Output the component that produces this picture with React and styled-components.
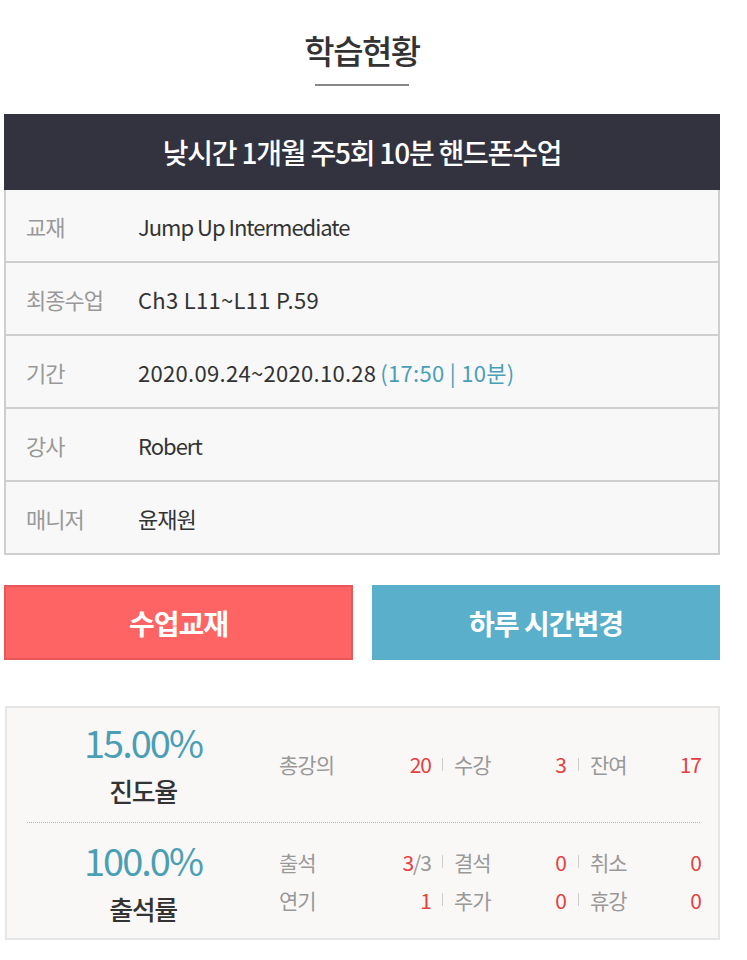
import React from 'react';
import styled, { createGlobalStyle } from 'styled-components';

const GlobalStyle = createGlobalStyle`
  body {
    margin: 0;
    background: #fff;
    font-family: "Noto Sans CJK KR", "Noto Sans", sans-serif;
    color: #333;
  }
`;

const Page = styled.div`
  width: 716px;
  padding: 0 0 20px 4px;
`;

const TitleWrap = styled.div`
  display: flex;
  flex-direction: column;
  align-items: center;
  padding-top: 26px;
  height: 88px;
`;

const Title = styled.h1`
  margin: 0;
  font-size: 33px;
  font-weight: 500;
  letter-spacing: -1.5px;
  line-height: 48px;
  color: #333;
`;

const TitleLine = styled.div`
  width: 94px;
  height: 2px;
  background: #888;
  margin-top: 10px;
`;

const CourseHeader = styled.div`
  height: 76px;
  background: #33323f;
  color: #fff;
  display: flex;
  align-items: center;
  justify-content: center;
  font-size: 28px;
  font-weight: 500;
  letter-spacing: -1.2px;
`;

const InfoTable = styled.div`
  border: 2px solid #cfcfcf;
  border-top: none;
  background: #f8f8f8;
`;

const InfoRow = styled.div`
  display: flex;
  align-items: center;
  height: 71px;
  border-top: ${p => (p.$first ? 'none' : '2px solid #cfcfcf')};
  font-size: 22px;
  letter-spacing: -1px;
`;

const InfoLabel = styled.div`
  width: 112px;
  padding-left: 20px;
  color: #999;
`;

const InfoValue = styled.div`
  color: #333;
  letter-spacing: ${p => (p.$numeric ? '0.3px' : '-1px')};
`;

const Accent = styled.span`
  color: #4a9fb8;
  margin-left: 4px;
`;

const ButtonRow = styled.div`
  display: grid;
  grid-template-columns: 349px 348px;
  justify-content: space-between;
  margin-top: 30px;
`;

const ActionButton = styled.button`
  height: 75px;
  border: 2px solid ${p => (p.$tone === 'red' ? '#e85858' : '#5aafcb')};
  background: ${p => (p.$tone === 'red' ? '#ff6464' : '#5aafcb')};
  color: #fff;
  font-family: inherit;
  font-size: 28px;
  font-weight: 700;
  letter-spacing: -1px;
  padding: 0;
`;

const StatsBox = styled.div`
  margin-top: 46px;
  margin-left: 1px;
  border: 2px solid #e6e6e6;
  background: #f9f8f7;
  padding: 0 18px 0 0;
`;

const StatsSection = styled.div`
  display: grid;
  grid-template-columns: 272px 1fr;
  align-items: center;
  height: ${p => (p.$top ? '114px' : '115px')};
`;

const DottedRule = styled.div`
  margin-left: 20px;
  border-top: 1px dotted #b8b0c8;
`;

const RateBlock = styled.div`
  display: flex;
  flex-direction: column;
  align-items: center;
  margin-top: ${p => (p.$second ? '4px' : '0')};
`;

const RateValue = styled.div`
  font-size: 38px;
  line-height: 46px;
  letter-spacing: -2px;
  color: #4a9fb5;
`;

const RateLabel = styled.div`
  font-size: 26px;
  line-height: 40px;
  margin-top: 6px;
  font-weight: 500;
  letter-spacing: -1.5px;
  color: #333;
`;

const StatGrid = styled.div`
  display: grid;
  grid-template-columns: 152px 23px 112px 24px 111px;
  row-gap: 4px;
  margin-top: ${p => (p.$second ? '0' : '-2px')};
`;

const StatCell = styled.div`
  display: flex;
  justify-content: space-between;
  align-items: center;
  font-size: 21px;
  line-height: 34px;
  letter-spacing: -1px;
`;

const StatLabel = styled.span`
  color: #999;
`;

const StatValue = styled.span`
  color: #e5403f;
`;

const Muted = styled.span`
  color: #999;
`;

const Divider = styled.div`
  display: flex;
  align-items: center;
  justify-content: center;
  &::before {
    content: '';
    width: 1px;
    height: 13px;
    background: #ccc;
  }
`;

const infoRows = [
  { label: '교재', value: 'Jump Up Intermediate' },
  { label: '최종수업', value: 'Ch3 L11~L11 P.59', numeric: true },
  {
    label: '기간',
    numeric: true,
    value: (
      <>
        2020.09.24~2020.10.28<Accent>(17:50 | 10분)</Accent>
      </>
    ),
  },
  { label: '강사', value: 'Robert' },
  { label: '매니저', value: '윤재원' },
];

function StatLine({ items }) {
  return items.map((item, i) => (
    <React.Fragment key={item.label}>
      {i > 0 && <Divider />}
      <StatCell>
        <StatLabel>{item.label}</StatLabel>
        <StatValue>{item.value}</StatValue>
      </StatCell>
    </React.Fragment>
  ));
}

export default function App() {
  return (
    <Page>
      <GlobalStyle />
      <TitleWrap>
        <Title>학습현황</Title>
        <TitleLine />
      </TitleWrap>

      <CourseHeader>낮시간 1개월 주5회 10분 핸드폰수업</CourseHeader>
      <InfoTable>
        {infoRows.map((row, i) => (
          <InfoRow key={row.label} $first={i === 0}>
            <InfoLabel>{row.label}</InfoLabel>
            <InfoValue $numeric={row.numeric}>{row.value}</InfoValue>
          </InfoRow>
        ))}
      </InfoTable>

      <ButtonRow>
        <ActionButton $tone="red">수업교재</ActionButton>
        <ActionButton $tone="blue">하루 시간변경</ActionButton>
      </ButtonRow>

      <StatsBox>
        <StatsSection $top>
          <RateBlock>
            <RateValue>15.00%</RateValue>
            <RateLabel>진도율</RateLabel>
          </RateBlock>
          <StatGrid>
            <StatLine
              items={[
                { label: '총강의', value: '20' },
                { label: '수강', value: '3' },
                { label: '잔여', value: '17' },
              ]}
            />
          </StatGrid>
        </StatsSection>
        <DottedRule />
        <StatsSection>
          <RateBlock $second>
            <RateValue>100.0%</RateValue>
            <RateLabel>출석률</RateLabel>
          </RateBlock>
          <StatGrid $second>
            <StatLine
              items={[
                { label: '출석', value: <>3<Muted>/3</Muted></> },
                { label: '결석', value: '0' },
                { label: '취소', value: '0' },
              ]}
            />
            <StatLine
              items={[
                { label: '연기', value: '1' },
                { label: '추가', value: '0' },
                { label: '휴강', value: '0' },
              ]}
            />
          </StatGrid>
        </StatsSection>
      </StatsBox>
    </Page>
  );
}
